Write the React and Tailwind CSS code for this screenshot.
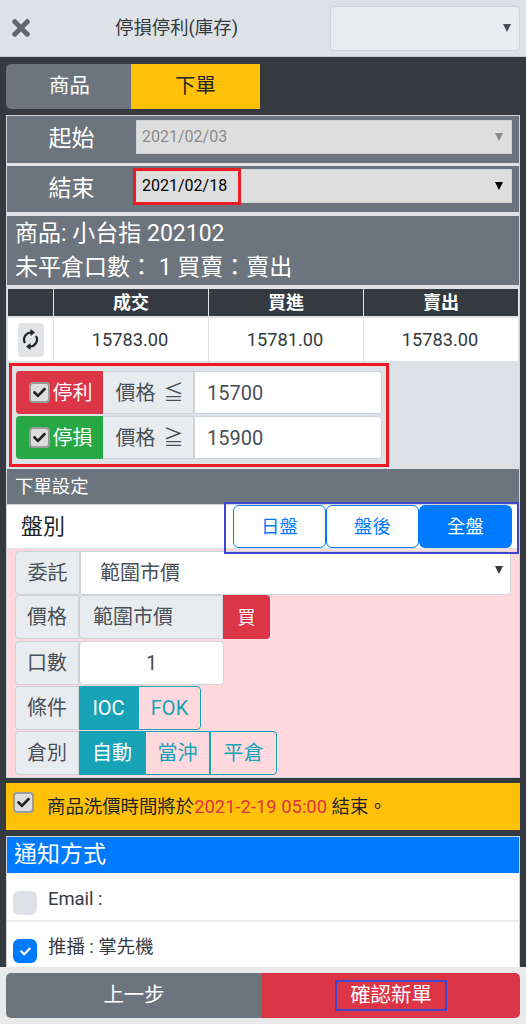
import { FaCheck, FaTimes } from "react-icons/fa";

const fontStack = "[font-family:Roboto,'Noto_Sans_CJK_TC',sans-serif]";

function Caret({ className }) {
  return (
    <svg viewBox="0 0 10 10" className={`h-[10px] w-[10px] ${className}`}>
      <polygon points="1,1 9,1 5,9" fill="currentColor" />
    </svg>
  );
}

function SyncIcon() {
  return (
    <svg viewBox="0 0 16 21" className="h-[21px] w-[17px]" fill="none" stroke="currentColor" strokeWidth="2.2">
      <path d="M2.5 14 A7 7 0 0 1 9 3.5" />
      <path d="M13.5 7 A7 7 0 0 1 7 17.5" />
      <polygon points="8,0 12.5,3.5 8,7" fill="currentColor" stroke="none" />
      <polygon points="8,14 3.5,17.5 8,21" fill="currentColor" stroke="none" />
    </svg>
  );
}

function NativeCheck() {
  return (
    <span className="flex h-[21px] w-[21px] shrink-0 items-center justify-center rounded-[4px] border-2 border-[#9a9a9a] bg-[#dddddd] text-[#222]">
      <FaCheck className="h-[13px] w-[13px]" />
    </span>
  );
}

function DateRow({ label, value, disabled, highlighted, className, boxClass }) {
  return (
    <div className={`flex items-center bg-[#6c757d] pr-[7px] ${className}`}>
      <div className="mb-[2px] w-[129px] text-center text-[23px] leading-none text-white">{label}</div>
      <div className={`relative flex h-[34px] flex-1 items-center border border-[#ced4da] bg-[#dedede] pr-[7px] pl-[5px] ${boxClass}`}>
        <span className={`flex-1 text-[16px] ${disabled ? "text-[#8b8b8b]" : "text-black"}`}>{value}</span>
        <Caret className={disabled ? "text-[#8b8b8b]" : "text-black"} />
        {highlighted ? (
          <div className="absolute top-[-2px] left-[-4px] h-[37px] w-[108px] border-[3px] border-[#ed1c24]" />
        ) : null}
      </div>
    </div>
  );
}

function StopRow({ label, color, sign, value }) {
  return (
    <div className="flex h-[43px]">
      <div className={`flex w-[87px] items-center justify-center gap-[3px] rounded-l-[4px] pl-[2px] text-[20px] text-white ${color}`}>
        <NativeCheck />
        <span>{label}</span>
      </div>
      <div className="flex w-[91px] items-center justify-center gap-[8px] border-y border-r border-[#ced4da] bg-[#e9ecef] pl-[3px] text-[20px] text-[#495057]">
        <span>價格</span>
        <span>{sign}</span>
      </div>
      <div className="flex w-[188px] items-center rounded-r-[4px] border border-[#ced4da] bg-white pl-[12px] text-[20px] text-[#495057]">
        {value}
      </div>
    </div>
  );
}

function FieldLabel({ children, width = "w-[64px]" }) {
  return (
    <div className={`flex shrink-0 items-center justify-center rounded-l-[4px] border border-[#ced4da] bg-[#e9ecef] pb-[1px] text-[20px] text-[#495057] ${width}`}>
      {children}
    </div>
  );
}

function ToggleButton({ children, active, last, width }) {
  const look = active ? "bg-[#17a2b8] text-white" : "border border-[#17a2b8] text-[#17a2b8]";
  return (
    <div className={`flex items-center justify-center text-[20px] ${look} ${width} ${last ? "rounded-r-[4px]" : ""}`}>
      {children}
    </div>
  );
}

function SessionButton({ children, active }) {
  const look = active ? "bg-[#007bff] text-white" : "border border-[#007bff] bg-white text-[#007bff]";
  return (
    <div className={`flex h-[43px] w-[93px] items-center justify-center rounded-[6px] text-[18.4px] ${look}`}>
      {children}
    </div>
  );
}

export default function App() {
  return (
    <div className={`flex h-[1024px] w-[526px] flex-col overflow-hidden bg-[#343a40] ${fontStack}`}>
      <header className="flex h-[57px] shrink-0 items-center border-b border-[#c6c8ca] bg-[#dee2e6]">
        <FaTimes className="ml-[12px] h-[26px] w-[18px] text-[#5f666c]" />
        <h1 className="ml-[85px] w-[215px] text-[18.4px] text-[#343a40]">停損停利(庫存)</h1>
        <div className="flex h-[45px] w-[190px] items-center justify-end rounded-[4px] border border-[#ced4da] bg-[#e9ecef] pr-[7px] text-[#495057]">
          <Caret />
        </div>
      </header>

      <main className="flex min-h-0 flex-1 flex-col px-[6px] pt-[7px]">
        <div className="flex h-[45px] w-[254px] text-[20.4px]">
          <div className="flex w-[125px] items-center justify-center rounded-l-[5px] bg-[#6c757d] pb-[1px] pl-[2px] text-white">商品</div>
          <div className="flex w-[129px] items-center justify-center bg-[#ffc107] pb-[1px] text-[#212529]">下單</div>
        </div>

        <section className="mt-[6px] flex flex-col gap-[1px] border border-[#ced4da] bg-[#dee2e6]">
          <DateRow label="起始" value="2021/02/03" disabled className="h-[47px]" boxClass="mb-[5px]" />
          <DateRow label="結束" value="2021/02/18" highlighted className="mt-[2px] h-[46px]" boxClass="mb-[6px]" />

          <div className="mt-[3px] h-[69px] bg-[#6c757d] pt-[1px] pl-[8px] text-[23px] leading-[34px] text-white">
            <p>商品: 小台指 202102</p>
            <p>未平倉口數： 1 買賣：賣出</p>
          </div>

          <div className="mt-[3px] grid grid-cols-[45px_154px_154px_154px] gap-x-[1px] pl-[1px]">
            <div className="h-[27px] bg-[#343a40]" />
            <div className="h-[27px] bg-[#343a40] text-center text-[18px] leading-[27px] font-bold text-white">成交</div>
            <div className="h-[27px] bg-[#343a40] text-center text-[18px] leading-[27px] font-bold text-white">買進</div>
            <div className="h-[27px] bg-[#343a40] text-center text-[18px] leading-[27px] font-bold text-white">賣出</div>
            <div className="mt-[2px] flex h-[43px] items-center justify-center bg-white">
              <div className="flex h-[34px] w-[26px] items-center justify-center rounded-[4px] bg-[#e2e3e5] text-[#212529]">
                <SyncIcon />
              </div>
            </div>
            <div className="mt-[2px] flex h-[43px] items-center justify-center bg-white pr-[2px] text-[18.2px] text-[#343a40]">15783.00</div>
            <div className="mt-[2px] flex h-[43px] items-center justify-center bg-white pr-[2px] text-[18.2px] text-[#343a40]">15781.00</div>
            <div className="mt-[2px] flex h-[43px] items-center justify-center bg-white pr-[2px] text-[18.2px] text-[#343a40]">15783.00</div>
          </div>

          <div className="mt-[1px] h-[105px] pl-[2px]">
            <div className="flex h-[104px] w-[380px] flex-col gap-[2px] border-[3px] border-[#ed1c24] pt-[5px] pl-[4px]">
              <StopRow label="停利" color="bg-[#dc3545]" sign="≦" value="15700" />
              <StopRow label="停損" color="bg-[#28a745]" sign="≧" value="15900" />
            </div>
          </div>

          <div className="relative">
            <div className="h-[35px] bg-[#6c757d] pl-[8px] text-[18.4px] leading-[36px] text-white">下單設定</div>
            <div className="flex h-[44px] items-center justify-between border-t border-[#ced4da] bg-white pr-[7px] pl-[14px]">
              <span className="text-[22px] text-[#212529]">盤別</span>
              <div className="flex">
                <SessionButton>日盤</SessionButton>
                <SessionButton>盤後</SessionButton>
                <SessionButton active>全盤</SessionButton>
              </div>
            </div>
            <div className="absolute top-[33px] right-0 h-[52px] w-[295px] border-[2px] border-[#3f48cc]" />
          </div>

          <div className="flex h-[228px] flex-col bg-[#ffd9de] pt-[2px] pl-[8px]">
            <div className="flex h-[44px] w-[496px]">
              <FieldLabel width="w-[65px]">委託</FieldLabel>
              <div className="flex flex-1 items-center justify-between rounded-r-[4px] border border-[#ced4da] bg-white pr-[6px] pl-[19px] text-[20px] text-[#495057]">
                <span>範圍市價</span>
                <Caret className="mb-[6px] text-[#343a40]" />
              </div>
            </div>
            <div className="flex h-[44px]">
              <FieldLabel>價格</FieldLabel>
              <div className="flex w-[144px] items-center rounded-l-[4px] border border-[#ced4da] bg-[#e9ecef] pl-[13px] text-[20px] text-[#495057]">範圍市價</div>
              <div className="flex w-[47px] items-center justify-center rounded-r-[4px] bg-[#dc3545] text-[18px] text-white">買</div>
            </div>
            <div className="mt-[2px] flex h-[44px]">
              <FieldLabel>口數</FieldLabel>
              <div className="flex w-[145px] items-center justify-center rounded-[4px] border border-[#ced4da] bg-white text-[20px] text-[#495057]">1</div>
            </div>
            <div className="mt-[1px] flex h-[44px]">
              <FieldLabel>條件</FieldLabel>
              <ToggleButton active width="w-[59px]">IOC</ToggleButton>
              <ToggleButton last width="w-[63px]">FOK</ToggleButton>
            </div>
            <div className="mt-[1px] flex h-[44px]">
              <FieldLabel>倉別</FieldLabel>
              <ToggleButton active width="w-[66px]">自動</ToggleButton>
              <ToggleButton width="w-[65px]">當沖</ToggleButton>
              <ToggleButton last width="w-[67px]">平倉</ToggleButton>
            </div>
          </div>
        </section>

        <section className="mt-[5px] flex h-[47px] shrink-0 gap-[13px] bg-[#ffc107] pt-[9px] pl-[7px] text-[18.4px] text-[#212529]">
          <NativeCheck />
          <p className="leading-[30px]">
            商品洗價時間將於<span className="text-[#dc3545]">2021-2-19 05:00 </span>結束。
          </p>
        </section>

        <section className="mt-[6px] min-h-0 flex-1 overflow-hidden border border-b-0 border-[#ced4da] bg-white">
          <div className="h-[36px] bg-[#007bff] pl-[7px] text-[23px] leading-[36px] text-white">通知方式</div>
          <div className="flex h-[49px] gap-[11px] border-b-2 border-[#e9ecef] pt-[18px] pl-[6px] text-[18.4px] text-[#343a40]">
            <span className="h-[24px] w-[24px] rounded-[6px] bg-[#dee2e6]" />
            <span className="mt-[-6px]">Email :</span>
          </div>
          <div className="flex gap-[11px] pt-[17px] pl-[6px] text-[18.4px] text-[#343a40]">
            <span className="flex h-[24px] w-[24px] items-center justify-center rounded-[6px] bg-[#007bff] text-white">
              <FaCheck className="h-[11px] w-[11px]" />
            </span>
            <span className="mt-[-6px]">推播 : 掌先機</span>
          </div>
        </section>
      </main>

      <footer className="flex h-[57px] shrink-0 bg-[#e9e9e9] p-[6px] text-[20.4px] text-white">
        <div className="flex w-[256px] items-center justify-center rounded-l-[5px] bg-[#6c757d]">上一步</div>
        <div className="relative flex w-[258px] items-center justify-center rounded-r-[5px] bg-[#dc3545]">
          <span>確認新單</span>
          <div className="absolute top-[7px] left-[73px] h-[31px] w-[112px] border-[2px] border-[#3f48cc]" />
        </div>
      </footer>
    </div>
  );
}
